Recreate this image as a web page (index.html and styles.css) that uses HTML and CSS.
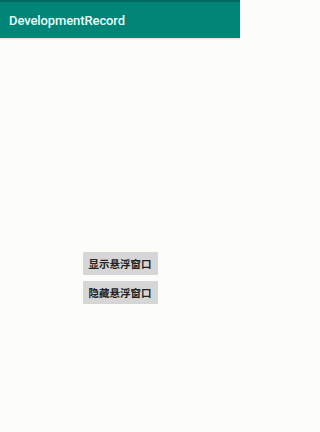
FILE: index.html
```html
<!DOCTYPE html>
<html>
<head>
<meta charset="utf-8">
<link rel="stylesheet" href="styles.css">
</head>
<body>
<div class="screen">
  <div class="statusbar"></div>
  <header class="appbar"><span class="title">DevelopmentRecord</span></header>
  <main class="content">
    <button class="btn">显示悬浮窗口</button>
    <button class="btn">隐藏悬浮窗口</button>
  </main>
</div>
</body>
</html>
```
FILE: styles.css
```css
html, body {
  margin: 0;
  padding: 0;
}
body {
  width: 240px;
  height: 432px;
  background: #fcfcf8;
  font-family: Roboto, "Noto Sans", "Noto Sans CJK SC", sans-serif;
  overflow: hidden;
}
.screen {
  display: flex;
  flex-direction: column;
  height: 432px;
}
.statusbar {
  height: 2px;
  background: #006b5f;
}
.appbar {
  height: 36px;
  background: #008577;
  display: flex;
  align-items: center;
  padding-left: 9px;
  box-shadow: 0 1px 2px rgba(0,0,0,0.15);
}
.title {
  color: #eafcf8;
  font-size: 13px;
  font-weight: 500;
  letter-spacing: -0.1px;
}
.content {
  flex: 1;
  display: flex;
  flex-direction: column;
  align-items: center;
  padding-top: 214px;
  gap: 6px;
}
.btn {
  width: 75px;
  height: 23px;
  margin: 0;
  padding: 0;
  border: none;
  border-radius: 1px;
  background: #d5d6d5;
  color: #222;
  font-family: "Noto Sans CJK SC", sans-serif;
  font-size: 10.5px;
  font-weight: 700;
  display: flex;
  align-items: center;
  justify-content: center;
}
```
